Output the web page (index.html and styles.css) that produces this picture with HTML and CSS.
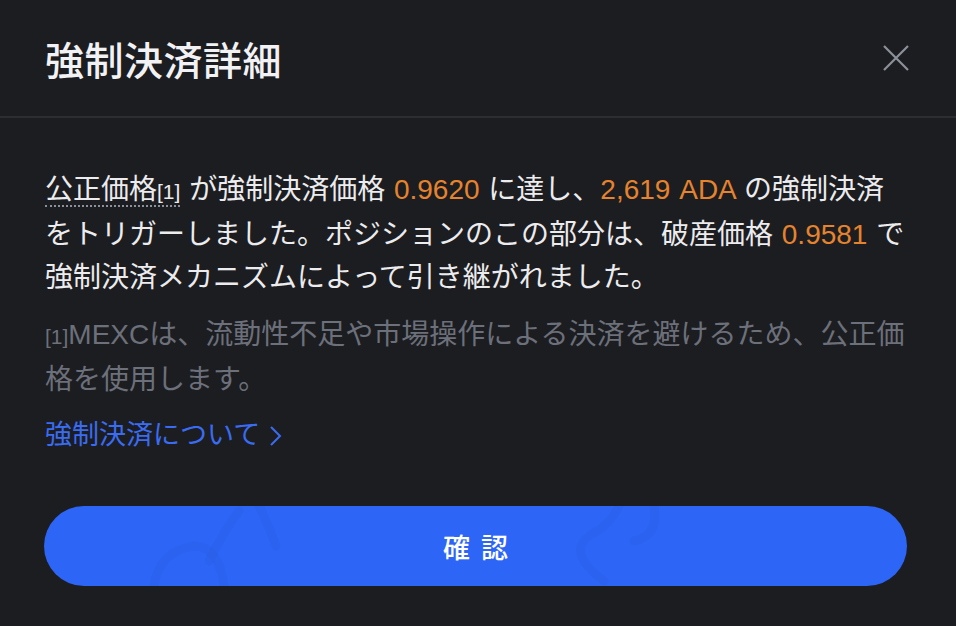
FILE: index.html
```html
<!DOCTYPE html>
<html lang="ja">
<head>
  <meta charset="UTF-8" />
  <title>強制決済詳細</title>
  <link rel="stylesheet" href="styles.css">
</head>
<body>

  <div class="dialog">
    <div class="dialog-header">
      <h1>強制決済詳細</h1>
      <button class="close-btn" aria-label="閉じる">
        <svg width="28" height="28" viewBox="0 0 28 28">
          <path d="M2 2 L26 26 M26 2 L2 26" stroke="#8b909a" stroke-width="2.2" fill="none" />
        </svg>
      </button>
    </div>

    <div class="dialog-body">
      <p class="summary">
        <span class="fair-price">公正価格<span class="ref">[1]</span></span> が強制決済価格 <span class="num">0.9620</span> に達し、<span class="num">2,619 ADA</span> の強制決済をトリガーしました。ポジションのこの部分は、破産価格 <span class="num">0.9581</span> で強制決済メカニズムによって引き継がれました。
      </p>
      <p class="note"><span class="ref">[1]</span>MEXCは、流動性不足や市場操作による決済を避けるため、公正価格を使用します。</p>
      <a class="more-link" href="#">強制決済について
        <svg width="16" height="26" viewBox="0 0 16 26">
          <path d="M3 4 L12 13 L3 22" stroke="#3a6cf2" stroke-width="2" fill="none" />
        </svg>
      </a>
    </div>

    <div class="dialog-footer">
      <button class="confirm-btn">
        <svg class="btn-deco" width="863" height="80" viewBox="0 0 863 80">
          <path d="M110 80 Q115 45 150 40 Q175 40 180 80" />
          <path d="M165 55 Q180 25 195 5" />
          <path d="M215 0 Q225 20 232 40" />
          <path d="M560 75 Q520 45 548 28 Q565 20 575 0" />
          <path d="M610 0 Q615 30 590 35" />
        </svg>
        <span>確認</span>
      </button>
    </div>
  </div>

</body>
</html>
```

FILE: styles.css
```css
html, body {
  margin: 0;
  padding: 0;
  background: #1c1d21;
}
body {
  font-family: "Liberation Sans", "Noto Sans CJK JP", sans-serif;
  color: #ececee;
}
.dialog {
  width: 956px;
  height: 626px;
  background: #1c1d21;
}
.dialog-header {
  display: flex;
  align-items: center;
  justify-content: space-between;
  height: 118px;
  padding: 0 45px;
  border-bottom: 2px solid #2c2d32;
  box-sizing: border-box;
}
.dialog-header h1 {
  margin: 0;
  font-size: 39px;
  font-weight: 500;
  color: #f2f2f4;
  letter-spacing: 0.5px;
}
.close-btn {
  background: none;
  border: none;
  padding: 0;
  margin-right: 1px;
  display: flex;
  cursor: pointer;
}
.dialog-body {
  padding: 50px 51px 0 45px;
}
.summary {
  margin: 0;
  font-size: 28px;
  line-height: 43px;
  word-spacing: 1px;
}
.fair-price {
  border-bottom: 2px dotted #8b909a;
}
.ref {
  font-size: 21px;
}
.num {
  color: #e5832e;
}
.note {
  margin: 14px 0 0 0;
  font-size: 28px;
  line-height: 43px;
  color: #6c707a;
}
.note .ref {
  font-size: 21px;
}
.more-link {
  display: inline-flex;
  align-items: center;
  gap: 8px;
  margin-top: 13px;
  font-size: 27px;
  line-height: 43px;
  color: #3a6cf2;
  text-decoration: none;
}
.dialog-footer {
  padding: 49px 49px 0 44px;
}
.confirm-btn {
  position: relative;
  width: 863px;
  height: 80px;
  border: none;
  border-radius: 40px;
  background: #2d65f6;
  color: #ffffff;
  font-family: "Liberation Sans", "Noto Sans CJK JP", sans-serif;
  font-size: 27px;
  font-weight: 500;
  letter-spacing: 11px;
  padding: 0 0 0 11px;
  overflow: hidden;
  cursor: pointer;
}
.confirm-btn span {
  position: relative;
}
.btn-deco {
  position: absolute;
  left: 0;
  top: 0;
}
.btn-deco path {
  fill: none;
  stroke: rgba(40, 80, 200, 0.12);
  stroke-width: 9;
  stroke-linecap: round;
}
```
